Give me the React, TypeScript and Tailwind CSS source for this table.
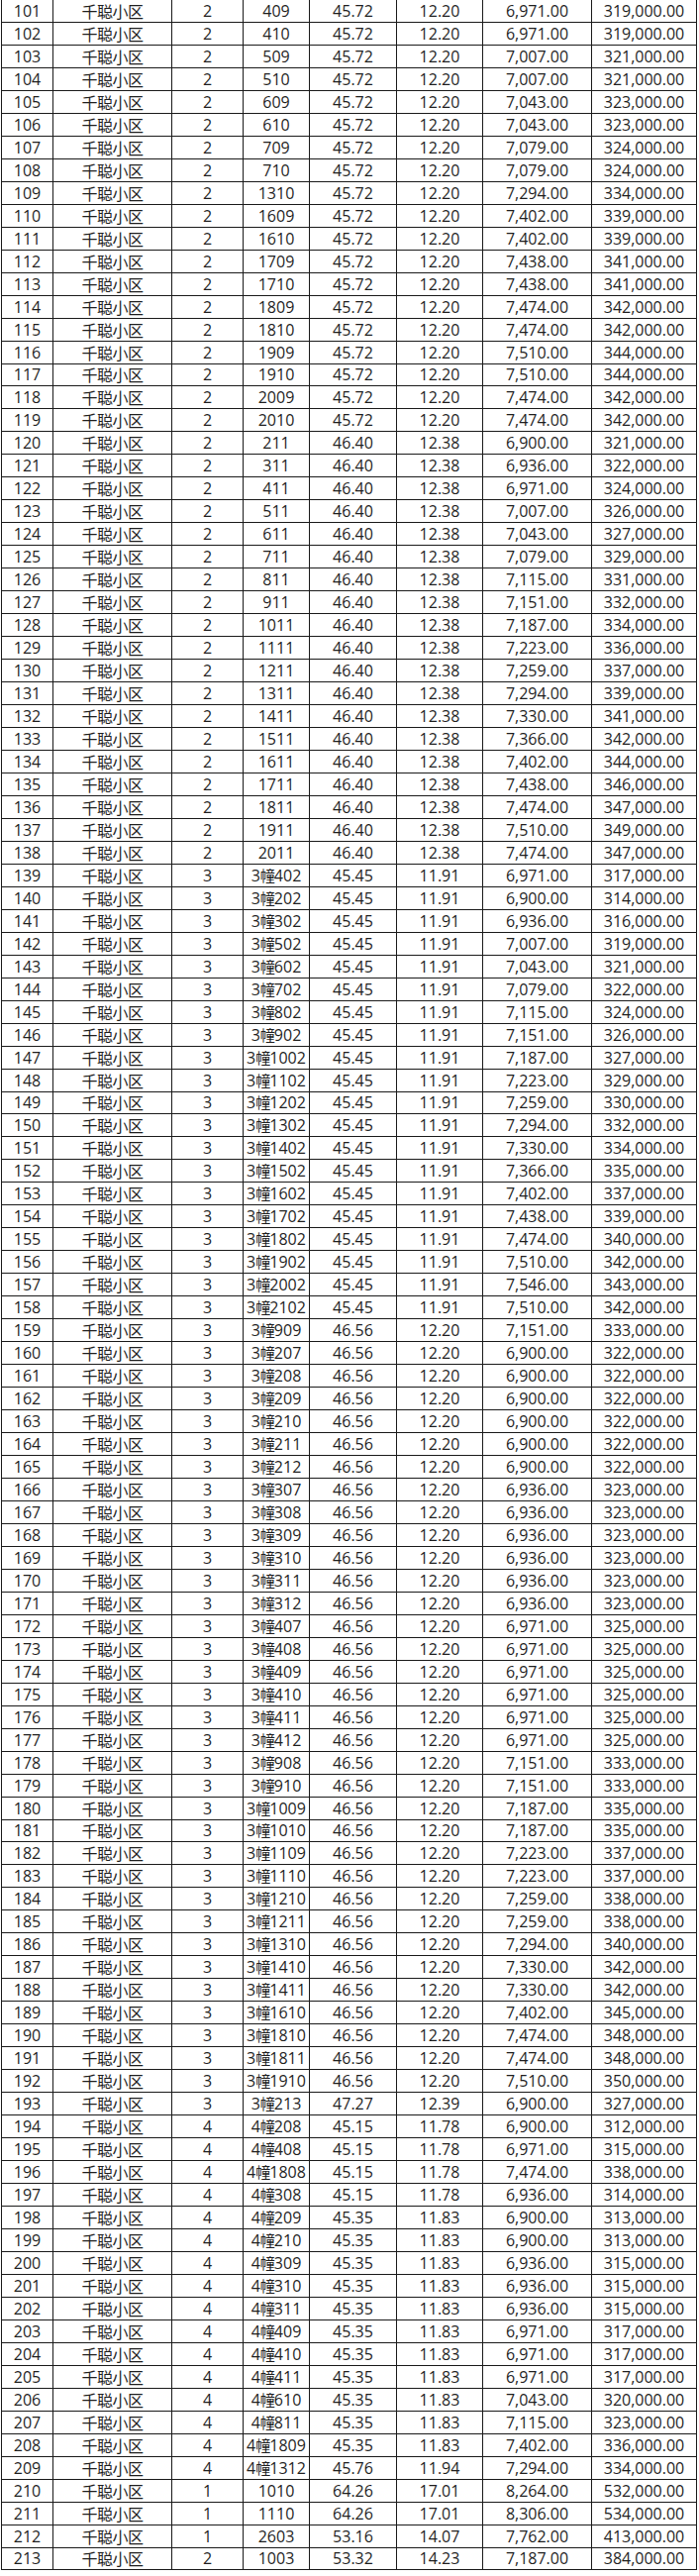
import React from "react";

const raw = `101|2|409|45.72|12.20|6,971.00|319,000.00
102|2|410|45.72|12.20|6,971.00|319,000.00
103|2|509|45.72|12.20|7,007.00|321,000.00
104|2|510|45.72|12.20|7,007.00|321,000.00
105|2|609|45.72|12.20|7,043.00|323,000.00
106|2|610|45.72|12.20|7,043.00|323,000.00
107|2|709|45.72|12.20|7,079.00|324,000.00
108|2|710|45.72|12.20|7,079.00|324,000.00
109|2|1310|45.72|12.20|7,294.00|334,000.00
110|2|1609|45.72|12.20|7,402.00|339,000.00
111|2|1610|45.72|12.20|7,402.00|339,000.00
112|2|1709|45.72|12.20|7,438.00|341,000.00
113|2|1710|45.72|12.20|7,438.00|341,000.00
114|2|1809|45.72|12.20|7,474.00|342,000.00
115|2|1810|45.72|12.20|7,474.00|342,000.00
116|2|1909|45.72|12.20|7,510.00|344,000.00
117|2|1910|45.72|12.20|7,510.00|344,000.00
118|2|2009|45.72|12.20|7,474.00|342,000.00
119|2|2010|45.72|12.20|7,474.00|342,000.00
120|2|211|46.40|12.38|6,900.00|321,000.00
121|2|311|46.40|12.38|6,936.00|322,000.00
122|2|411|46.40|12.38|6,971.00|324,000.00
123|2|511|46.40|12.38|7,007.00|326,000.00
124|2|611|46.40|12.38|7,043.00|327,000.00
125|2|711|46.40|12.38|7,079.00|329,000.00
126|2|811|46.40|12.38|7,115.00|331,000.00
127|2|911|46.40|12.38|7,151.00|332,000.00
128|2|1011|46.40|12.38|7,187.00|334,000.00
129|2|1111|46.40|12.38|7,223.00|336,000.00
130|2|1211|46.40|12.38|7,259.00|337,000.00
131|2|1311|46.40|12.38|7,294.00|339,000.00
132|2|1411|46.40|12.38|7,330.00|341,000.00
133|2|1511|46.40|12.38|7,366.00|342,000.00
134|2|1611|46.40|12.38|7,402.00|344,000.00
135|2|1711|46.40|12.38|7,438.00|346,000.00
136|2|1811|46.40|12.38|7,474.00|347,000.00
137|2|1911|46.40|12.38|7,510.00|349,000.00
138|2|2011|46.40|12.38|7,474.00|347,000.00
139|3|3幢402|45.45|11.91|6,971.00|317,000.00
140|3|3幢202|45.45|11.91|6,900.00|314,000.00
141|3|3幢302|45.45|11.91|6,936.00|316,000.00
142|3|3幢502|45.45|11.91|7,007.00|319,000.00
143|3|3幢602|45.45|11.91|7,043.00|321,000.00
144|3|3幢702|45.45|11.91|7,079.00|322,000.00
145|3|3幢802|45.45|11.91|7,115.00|324,000.00
146|3|3幢902|45.45|11.91|7,151.00|326,000.00
147|3|3幢1002|45.45|11.91|7,187.00|327,000.00
148|3|3幢1102|45.45|11.91|7,223.00|329,000.00
149|3|3幢1202|45.45|11.91|7,259.00|330,000.00
150|3|3幢1302|45.45|11.91|7,294.00|332,000.00
151|3|3幢1402|45.45|11.91|7,330.00|334,000.00
152|3|3幢1502|45.45|11.91|7,366.00|335,000.00
153|3|3幢1602|45.45|11.91|7,402.00|337,000.00
154|3|3幢1702|45.45|11.91|7,438.00|339,000.00
155|3|3幢1802|45.45|11.91|7,474.00|340,000.00
156|3|3幢1902|45.45|11.91|7,510.00|342,000.00
157|3|3幢2002|45.45|11.91|7,546.00|343,000.00
158|3|3幢2102|45.45|11.91|7,510.00|342,000.00
159|3|3幢909|46.56|12.20|7,151.00|333,000.00
160|3|3幢207|46.56|12.20|6,900.00|322,000.00
161|3|3幢208|46.56|12.20|6,900.00|322,000.00
162|3|3幢209|46.56|12.20|6,900.00|322,000.00
163|3|3幢210|46.56|12.20|6,900.00|322,000.00
164|3|3幢211|46.56|12.20|6,900.00|322,000.00
165|3|3幢212|46.56|12.20|6,900.00|322,000.00
166|3|3幢307|46.56|12.20|6,936.00|323,000.00
167|3|3幢308|46.56|12.20|6,936.00|323,000.00
168|3|3幢309|46.56|12.20|6,936.00|323,000.00
169|3|3幢310|46.56|12.20|6,936.00|323,000.00
170|3|3幢311|46.56|12.20|6,936.00|323,000.00
171|3|3幢312|46.56|12.20|6,936.00|323,000.00
172|3|3幢407|46.56|12.20|6,971.00|325,000.00
173|3|3幢408|46.56|12.20|6,971.00|325,000.00
174|3|3幢409|46.56|12.20|6,971.00|325,000.00
175|3|3幢410|46.56|12.20|6,971.00|325,000.00
176|3|3幢411|46.56|12.20|6,971.00|325,000.00
177|3|3幢412|46.56|12.20|6,971.00|325,000.00
178|3|3幢908|46.56|12.20|7,151.00|333,000.00
179|3|3幢910|46.56|12.20|7,151.00|333,000.00
180|3|3幢1009|46.56|12.20|7,187.00|335,000.00
181|3|3幢1010|46.56|12.20|7,187.00|335,000.00
182|3|3幢1109|46.56|12.20|7,223.00|337,000.00
183|3|3幢1110|46.56|12.20|7,223.00|337,000.00
184|3|3幢1210|46.56|12.20|7,259.00|338,000.00
185|3|3幢1211|46.56|12.20|7,259.00|338,000.00
186|3|3幢1310|46.56|12.20|7,294.00|340,000.00
187|3|3幢1410|46.56|12.20|7,330.00|342,000.00
188|3|3幢1411|46.56|12.20|7,330.00|342,000.00
189|3|3幢1610|46.56|12.20|7,402.00|345,000.00
190|3|3幢1810|46.56|12.20|7,474.00|348,000.00
191|3|3幢1811|46.56|12.20|7,474.00|348,000.00
192|3|3幢1910|46.56|12.20|7,510.00|350,000.00
193|3|3幢213|47.27|12.39|6,900.00|327,000.00
194|4|4幢208|45.15|11.78|6,900.00|312,000.00
195|4|4幢408|45.15|11.78|6,971.00|315,000.00
196|4|4幢1808|45.15|11.78|7,474.00|338,000.00
197|4|4幢308|45.15|11.78|6,936.00|314,000.00
198|4|4幢209|45.35|11.83|6,900.00|313,000.00
199|4|4幢210|45.35|11.83|6,900.00|313,000.00
200|4|4幢309|45.35|11.83|6,936.00|315,000.00
201|4|4幢310|45.35|11.83|6,936.00|315,000.00
202|4|4幢311|45.35|11.83|6,936.00|315,000.00
203|4|4幢409|45.35|11.83|6,971.00|317,000.00
204|4|4幢410|45.35|11.83|6,971.00|317,000.00
205|4|4幢411|45.35|11.83|6,971.00|317,000.00
206|4|4幢610|45.35|11.83|7,043.00|320,000.00
207|4|4幢811|45.35|11.83|7,115.00|323,000.00
208|4|4幢1809|45.35|11.83|7,402.00|336,000.00
209|4|4幢1312|45.76|11.94|7,294.00|334,000.00
210|1|1010|64.26|17.01|8,264.00|532,000.00
211|1|1110|64.26|17.01|8,306.00|534,000.00
212|1|2603|53.16|14.07|7,762.00|413,000.00
213|2|1003|53.32|14.23|7,187.00|384,000.00`;

const rows = raw.split("\n").map((l) => l.split("|"));

function Cell({ children }: { children: React.ReactNode }) {
  return (
    <div className="flex items-center justify-center border-r border-b border-[#1a1a1a] whitespace-nowrap overflow-hidden leading-none">
      {children}
    </div>
  );
}

function Unit({ v }: { v: string }) {
  if (!v.includes("幢")) return <>{v}</>;
  return (
    <span>
      {v.slice(0, 1)}
      <span className="font-['Noto_Sans_CJK_SC',sans-serif] text-[15px] tracking-[-1px]">幢</span>
      {v.slice(2)}
    </span>
  );
}

export default function App() {
  return (
    <div className="bg-white w-[706px] h-[2601px] overflow-hidden">
      <div className="ml-[1px] w-[703px] border-l border-[#1a1a1a] grid grid-cols-[52px_120px_72px_67px_88px_87px_110px_106px] auto-rows-[22.98px] text-[16px] text-[#1f1f1f] font-['Open_Sans','Noto_Sans_CJK_SC',sans-serif]">
        {rows.map((r) => (
          <React.Fragment key={r[0]}>
            <Cell>{r[0]}</Cell>
            <Cell>
              <span className="font-['Noto_Sans_CJK_SC',sans-serif] text-[16px] tracking-[-0.5px]">千聪小区</span>
            </Cell>
            <Cell>{r[1]}</Cell>
            <Cell>
              <Unit v={r[2]} />
            </Cell>
            <Cell>{r[3]}</Cell>
            <Cell>{r[4]}</Cell>
            <Cell>{r[5]}</Cell>
            <Cell>{r[6]}</Cell>
          </React.Fragment>
        ))}
      </div>
    </div>
  );
}
